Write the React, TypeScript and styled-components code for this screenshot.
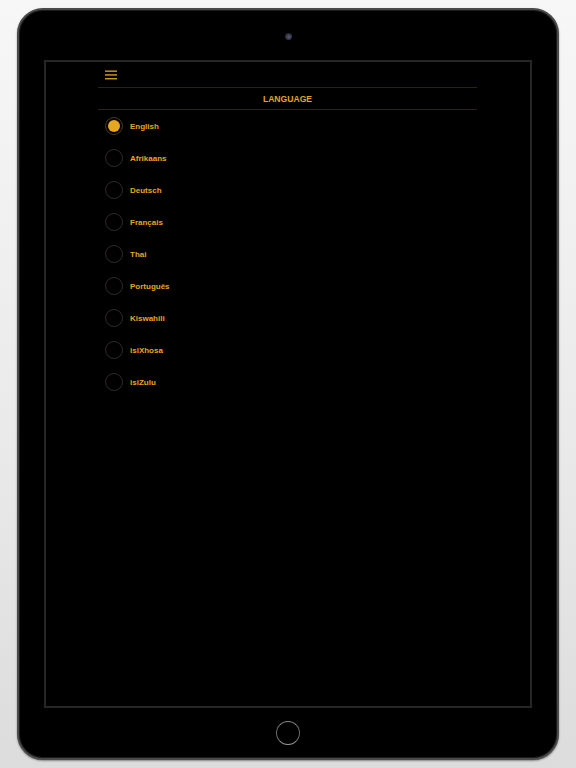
import styled, { createGlobalStyle } from "styled-components";

const GOLD = "#e6a622";

const languages = [
  "English",
  "Afrikaans",
  "Deutsch",
  "Français",
  "Thai",
  "Português",
  "Kiswahili",
  "isiXhosa",
  "isiZulu",
];

const GlobalStyle = createGlobalStyle`
  html, body {
    margin: 0;
    padding: 0;
  }
  body {
    width: 576px;
    height: 768px;
    overflow: hidden;
    background: linear-gradient(180deg, #f7f7f7 0%, #e9e9e9 60%, #dcdcdc 100%);
    font-family: "Liberation Sans", Arial, sans-serif;
  }
`;

const Page = styled.div`
  padding: 8px 17px;
`;

const Device = styled.div`
  box-sizing: border-box;
  width: 542px;
  height: 752px;
  border-radius: 26px;
  background: #000;
  border: 2px solid #4a4a4a;
  box-shadow: inset 0 0 0 1px #1a1a1a, 0 1px 2px rgba(0, 0, 0, 0.4);
  display: flex;
  flex-direction: column;
  align-items: center;
`;

const Bezel = styled.div`
  height: 50px;
  width: 100%;
  display: flex;
  align-items: center;
  justify-content: center;
`;

const Camera = styled.div`
  width: 7px;
  height: 7px;
  border-radius: 50%;
  margin-top: 2px;
  background: radial-gradient(circle at 55% 55%, #5a5a78 0%, #2c2c3a 60%, #111 100%);
`;

const HomeButton = styled.div`
  width: 22px;
  height: 22px;
  border-radius: 50%;
  border: 1.5px solid #6a6a6a;
  border-top-color: #8a8a8a;
  border-bottom-color: #9a9a9a;
`;

const Screen = styled.div`
  box-sizing: border-box;
  width: 488px;
  height: 648px;
  border: 2px solid #262626;
  background: #000;
  display: flex;
  padding-left: 52px;
`;

const Content = styled.div`
  width: 379px;
  display: flex;
  flex-direction: column;
`;

const NavBar = styled.div`
  height: 25px;
  display: flex;
  align-items: center;
  padding-left: 7px;
  border-bottom: 1px solid #2a2410;
`;

const Burger = styled.svg`
  width: 12px;
  height: 10px;
  margin-top: 1px;
`;

const Header = styled.div`
  height: 21px;
  display: flex;
  align-items: center;
  justify-content: center;
  color: ${GOLD};
  font-size: 8.6px;
  font-weight: 700;
  border-bottom: 1px solid #2a2410;
`;

const List = styled.div`
  display: flex;
  flex-direction: column;
`;

const Row = styled.div`
  height: 32px;
  display: flex;
  align-items: center;
  padding-left: 7px;
  gap: 7px;
`;

const Radio = styled.div<{ $checked: boolean }>`
  box-sizing: border-box;
  width: 18px;
  height: 18px;
  border-radius: 50%;
  border: 1px solid ${(p) => (p.$checked ? "#4a3a12" : "#302c1e")};
  display: flex;
  align-items: center;
  justify-content: center;
`;

const Dot = styled.div`
  width: 12px;
  height: 12px;
  border-radius: 50%;
  background: ${GOLD};
`;

const Label = styled.span`
  color: ${GOLD};
  font-size: 8px;
  font-weight: 700;
`;

export default function App() {
  return (
    <>
      <GlobalStyle />
      <Page>
        <Device>
          <Bezel>
            <Camera />
          </Bezel>
          <Screen>
            <Content>
              <NavBar>
                <Burger viewBox="0 0 12 10">
                  <rect x="0" y="0.5" width="12" height="1.3" fill={GOLD} />
                  <rect x="0" y="4.3" width="12" height="1.3" fill={GOLD} />
                  <rect x="0" y="8.1" width="12" height="1.3" fill={GOLD} />
                </Burger>
              </NavBar>
              <Header>LANGUAGE</Header>
              <List>
                {languages.map((lang, i) => (
                  <Row key={lang}>
                    <Radio $checked={i === 0}>{i === 0 && <Dot />}</Radio>
                    <Label>{lang}</Label>
                  </Row>
                ))}
              </List>
            </Content>
          </Screen>
          <Bezel>
            <HomeButton />
          </Bezel>
        </Device>
      </Page>
    </>
  );
}
